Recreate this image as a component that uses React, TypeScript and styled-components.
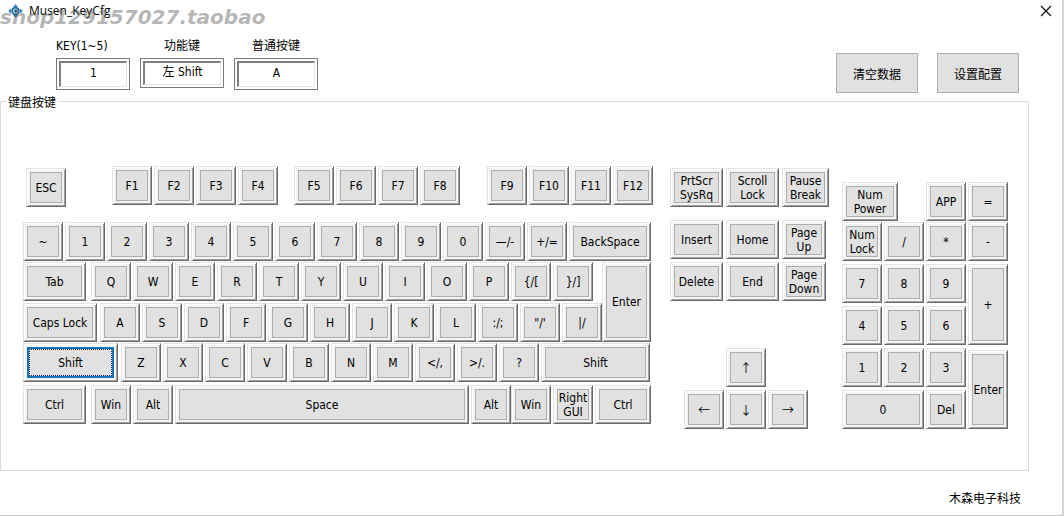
import React from 'react';
import styled, { createGlobalStyle, css } from 'styled-components';

const GlobalStyle = createGlobalStyle`
  *, *::before, *::after { box-sizing: border-box; }
  body {
    margin: 0;
    background: #fff;
    color: #000;
    font-family: "DejaVu Sans Condensed", "Noto Sans CJK SC", sans-serif;
    font-size: 12px;
    line-height: 14px;
  }
  button, input { font: inherit; color: inherit; }
`;

const CJK = '"Noto Sans CJK SC", sans-serif';

const Window = styled.main`
  position: relative;
  display: flex;
  flex-direction: column;
  min-height: 100vh;
  border-right: 2px solid #d4d4d4;
  border-bottom: 1px solid #c4c4c4;
`;

const TitleBar = styled.header`
  display: flex;
  align-items: center;
  height: 22px;
  padding: 0 10px 0 8px;
`;

const Title = styled.h1`
  flex: 1;
  margin: 0 0 0 6px;
  font: 400 12px/16px "Open Sans", sans-serif;
`;

const CloseButton = styled.button`
  display: flex;
  padding: 0;
  border: 0;
  background: none;
`;

const Watermark = styled.div`
  position: absolute;
  left: 0;
  top: 6px;
  font: italic 700 20px/22px "DejaVu Sans", sans-serif;
  color: rgba(90, 90, 90, 0.45);
  pointer-events: none;
`;

const Toolbar = styled.div`
  display: flex;
  align-items: flex-start;
  justify-content: space-between;
  padding: 16px 43px 0 56px;
`;

const Fields = styled.div`
  display: flex;
  gap: 10px;
`;

const Field = styled.label<{ $width: number }>`
  display: flex;
  flex-direction: column;
  gap: 4px;
  width: ${p => p.$width}px;
`;

const FieldLabel = styled.span<{ $center?: boolean }>`
  line-height: 16px;
  text-align: ${p => (p.$center ? 'center' : 'left')};
`;

const FieldFrame = styled.span<{ $height: number }>`
  display: flex;
  height: ${p => p.$height}px;
  padding: 2px;
  border: 1px solid #7a7a7a;
`;

const FieldInput = styled.input`
  width: 100%;
  min-width: 0;
  padding: 0 0 4px;
  border: 2px solid;
  border-color: #808080 #e3e3e3 #e3e3e3 #808080;
  border-right-width: 1px;
  border-bottom-width: 1px;
  outline: 0;
  background: #fff;
  text-align: center;
`;

const Actions = styled.div`
  display: flex;
  gap: 19px;
  padding-top: 15px;
`;

const ActionButton = styled.button`
  width: 82px;
  height: 40px;
  padding: 2px 0 0;
  border: 1px solid #adadad;
  background: #e1e1e1;
  font-family: ${CJK};
`;

const KeyboardGroup = styled.fieldset`
  min-width: 0;
  margin: 1px 33px 0 0;
  padding: 57px 20px 41px 22px;
  border: 1px solid #dcdcdc;
`;

const Legend = styled.legend`
  margin-left: -17px;
  padding: 0 2px;
  font-family: ${CJK};
  line-height: 15px;
`;

const Keyboard = styled.div`
  display: flex;
  align-items: flex-start;
`;

const Block = styled.section<{ $left?: number; $top?: number }>`
  flex: none;
  margin: ${p => p.$top ?? 0}px 0 0 ${p => p.$left ?? 0}px;
`;

const Row = styled.div<{ $gap?: number; $top?: number }>`
  display: flex;
  gap: ${p => p.$gap ?? 2}px;
  margin-top: ${p => p.$top ?? 0}px;
`;

const FunctionRow = styled(Row)`
  gap: 0;
  padding-left: 3px;
`;

const FunctionGroup = styled(Row)<{ $left: number }>`
  margin-left: ${p => p.$left}px;
`;

const ArrowGrid = styled.div`
  display: grid;
  grid-template-columns: repeat(3, 40px);
  gap: 3px 2px;
  margin: 47px 0 0 14px;
  font-family: ${CJK};

  & > :first-child { grid-column: 2; }
  & > :nth-child(2) { grid-column: 1; }
`;

const PadGrid = styled.div`
  display: grid;
  grid-template-columns: repeat(4, 40px);
  grid-auto-rows: 39px;
  gap: 3px 2px;
  margin-top: 1px;
`;

const Cap = styled.button<{ $w: number; $tall?: boolean; $colSpan?: number; $drop?: number }>`
  display: flex;
  flex: none;
  width: ${p => p.$w}px;
  height: ${p => (p.$tall ? 'auto' : '39px')};
  margin: ${p => p.$drop ?? 0}px 0 0;
  padding: 3px;
  border: 1px solid;
  border-color: #e3e3e3 #696969 #696969 #e3e3e3;
  background: #f4f4f4;
  box-shadow: inset 1px 1px #fff, inset -1px -1px #a0a0a0;
  ${p => p.$tall && css`grid-row: span 2;`}
  ${p => p.$colSpan && css`grid-column: span ${p.$colSpan};`}
`;

const Face = styled.span<{ $selected?: boolean }>`
  display: flex;
  flex: 1;
  align-self: stretch;
  align-items: center;
  min-width: 0;
  overflow: hidden;
  border: 1px solid #adadad;
  background: #e1e1e1;
  white-space: pre;
  ${p => p.$selected && css`
    border: 2px solid #1874b8;
    outline: 1px dotted #102a50;
    outline-offset: -3px;
  `}
`;

const KeyText = styled.span`
  flex: none;
  margin: 0 auto;
`;

const Footer = styled.footer`
  padding: 18px 41px 8px 0;
  font-family: ${CJK};
  line-height: 17px;
  text-align: right;
`;

type KeyProps = {
  label: string;
  w?: number;
  tall?: boolean;
  colSpan?: number;
  drop?: number;
  selected?: boolean;
};

const Key = ({ label, w = 40, tall, colSpan, drop, selected }: KeyProps) => (
  <Cap type="button" $w={w} $tall={tall} $colSpan={colSpan} $drop={drop}>
    <Face $selected={selected}>
      <KeyText>{label}</KeyText>
    </Face>
  </Cap>
);

const Keys = ({ labels }: { labels: string[] }) => (
  <>
    {labels.map(label => (
      <Key key={label} label={label} />
    ))}
  </>
);

const Logo = () => (
  <svg width="15" height="14" viewBox="0 0 15 14" aria-hidden="true">
    <path d="M7.500 0 10 3H5ZM7.500 14 5 11h5ZM0 7 3 4.500v5ZM15 7l-3 2.500v-5Z" fill="#3d8fc0" />
    <circle cx="7.500" cy="7" r="4.300" fill="#1d6a9c" />
    <circle cx="7.500" cy="7" r="2.600" fill="#a9dcf2" />
    <circle cx="7.500" cy="7" r="1.300" fill="#16557f" />
  </svg>
);

const fields = [
  { label: 'KEY(1~5)', value: '1', width: 74, height: 32, center: false },
  { label: '功能键', value: '左 Shift', width: 84, height: 30, center: true },
  { label: '普通按键', value: 'A', width: 84, height: 32, center: true },
];

export default function App() {
  return (
    <>
      <GlobalStyle />
      <Window>
        <TitleBar>
          <Logo />
          <Title>Musen_KeyCfg</Title>
          <CloseButton type="button" aria-label="Close">
            <svg width="12" height="12" viewBox="0 0 12 12">
              <path d="M1 1 11 11M11 1 1 11" stroke="#111" strokeWidth="1.200" fill="none" />
            </svg>
          </CloseButton>
        </TitleBar>
        <Watermark>shop129157027.taobao</Watermark>

        <Toolbar>
          <Fields>
            {fields.map(f => (
              <Field key={f.label} $width={f.width}>
                <FieldLabel $center={f.center}>{f.label}</FieldLabel>
                <FieldFrame $height={f.height}>
                  <FieldInput defaultValue={f.value} />
                </FieldFrame>
              </Field>
            ))}
          </Fields>
          <Actions>
            <ActionButton type="button">清空数据</ActionButton>
            <ActionButton type="button">设置配置</ActionButton>
          </Actions>
        </Toolbar>

        <KeyboardGroup>
          <Legend>键盘按键</Legend>
          <Keyboard>
            <Block>
              <FunctionRow>
                <Key label="ESC" drop={2} />
                <FunctionGroup $left={46}><Keys labels={['F1', 'F2', 'F3', 'F4']} /></FunctionGroup>
                <FunctionGroup $left={16}><Keys labels={['F5', 'F6', 'F7', 'F8']} /></FunctionGroup>
                <FunctionGroup $left={27}><Keys labels={['F9', 'F10', 'F11', 'F12']} /></FunctionGroup>
              </FunctionRow>
              <Row $top={15}>
                <Keys labels={['~', '1', '2', '3', '4', '5', '6', '7', '8', '9', '0', '—/-', '+/=']} />
                <Key label="BackSpace" w={82} />
              </Row>
              <Row $gap={0} $top={1}>
                <div>
                  <Row $gap={5}>
                    <Key label="Tab" w={63} />
                    <Row>
                      <Keys labels={['Q', 'W', 'E', 'R', 'T', 'Y', 'U', 'I', 'O', 'P', '{/[', '}/]']} />
                    </Row>
                  </Row>
                  <Row $gap={3} $top={2}>
                    <Key label="Caps Lock" w={74} />
                    <Row>
                      <Keys labels={['A', 'S', 'D', 'F', 'G', 'H', 'J', 'K', 'L', ':/;', '"/\'', '|/']} />
                    </Row>
                  </Row>
                </div>
                <Key label="Enter" w={49} tall />
              </Row>
              <Row $top={1}>
                <Row $gap={3}>
                  <Key label="Shift" w={95} selected />
                  <Row>
                    <Keys labels={['Z', 'X', 'C', 'V', 'B', 'N', 'M', '</,', '>/.', '?']} />
                  </Row>
                </Row>
                <Key label="Shift" w={109} />
              </Row>
              <Row $top={3}>
                <Row $gap={5}>
                  <Key label="Ctrl" w={63} />
                  <Key label="Win" />
                </Row>
                <Key label="Alt" />
                <Key label="Space" w={294} />
                <Row $gap={0}><Keys labels={['Alt', 'Win']} /></Row>
                <Key label={'Right\nGUI'} />
                <Key label="Ctrl" w={56} />
              </Row>
            </Block>

            <Block $left={17} $top={2}>
              <Row $gap={3}>
                <Key label={'PrtScr\nSysRq'} w={53} />
                <Key label={'Scroll\nLock'} w={53} />
                <Key label={'Pause\nBreak'} w={47} />
              </Row>
              <Row $gap={3} $top={13}>
                <Key label="Insert" w={53} />
                <Key label="Home" w={53} />
                <Key label={'Page\nUp'} w={44} />
              </Row>
              <Row $gap={3} $top={3}>
                <Key label="Delete" w={53} />
                <Key label="End" w={53} />
                <Key label={'Page\nDown'} w={44} />
              </Row>
              <ArrowGrid>
                <Keys labels={['↑', '←', '↓', '→']} />
              </ArrowGrid>
            </Block>

            <Block $left={13} $top={16}>
              <Row $gap={28}>
                <Key label={'Num\nPower'} w={56} />
                <Row><Keys labels={['APP', '=']} /></Row>
              </Row>
              <PadGrid>
                <Key label={'Num\nLock'} />
                <Keys labels={['/', '*', '-', '7', '8', '9']} />
                <Key label="+" tall />
                <Keys labels={['4', '5', '6', '1', '2', '3']} />
                <Key label="Enter" tall drop={2} />
                <Key label="0" w={82} colSpan={2} />
                <Key label="Del" />
              </PadGrid>
            </Block>
          </Keyboard>
        </KeyboardGroup>

        <Footer>木森电子科技</Footer>
      </Window>
    </>
  );
}
